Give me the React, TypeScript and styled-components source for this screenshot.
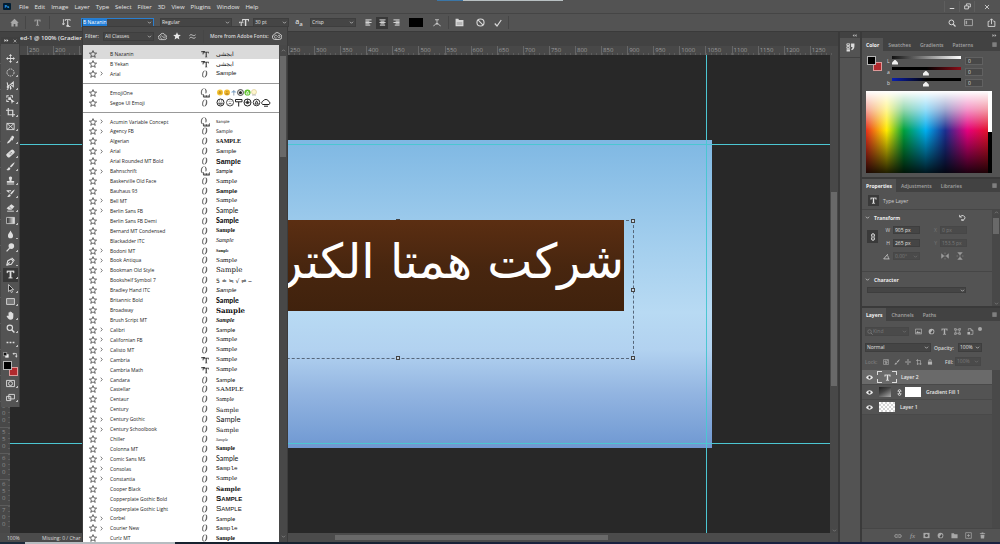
import React from "react";
import styled, { createGlobalStyle, css } from "styled-components";

const Global = createGlobalStyle`
  * { box-sizing: border-box; }
  html, body, #root { height: 100%; }
  body {
    margin: 0;
    background: #535353;
    color: #dcdcdc;
    font: 5px/8px "Open Sans", "Noto Sans", sans-serif;
    overflow: hidden;
  }
  button, input, select { font: inherit; color: inherit; margin: 0; padding: 0; border: 0; background: none; border-radius: 0; outline: 0; }
  svg { display: block; flex: none; }
`;

/* ---------- icons ---------- */

const S = { fill: "none", stroke: "currentColor", strokeWidth: 1.6 } as const;

const icons: Record<string, React.ReactNode> = {
  home: <path d="M8 1.5 0.5 8.5h2V15h4v-4.500h3V15h4V8.500h2z" fill="#a8a8a8" />,
  type: <path d="M1.500 1.500h13v4h-1.300c-.3-1.800-.9-2.400-2.700-2.400H9.300v9.400c0 .9.4 1.100 2.100 1.200v.9H4.600v-.9c1.700-.1 2.100-.3 2.100-1.200V3.100H5.500c-1.800 0-2.400.6-2.700 2.400H1.500z" fill="currentColor" stroke="currentColor" strokeWidth=".5" />,
  orient: <><path d="M5 2h10v3.500h-1c-.2-1.300-.6-1.800-2-1.800h-.9v8.500c0 .6.3.8 1.400.9v.9H7.800v-.9c1.100-.1 1.400-.3 1.400-.9V3.700h-1c-1.300 0-1.800.4-2 1.800H5z" fill="currentColor" /><path d="M2.500 2v10M.5 9.500l2 3 2-3M8 15.200h7" {...S} /></>,
  size: <path d="M5 1.500h11v4h-1.100c-.3-1.600-.8-2.200-2.300-2.200h-.9v9.100c0 .8.3 1 1.600 1.100v1H7.800v-1c1.300-.1 1.600-.3 1.600-1.100V3.300h-.9C7 3.300 6.400 3.900 6.100 5.500H5zM0 6h7v2.500h-.8C6 7.600 5.700 7.300 4.900 7.300h-.5v5.300c0 .5.2.7.9.8v.8H1.800v-.8c.7-.1.900-.3.900-.8V7.300h-.5C1.300 7.300 1 7.600.8 8.500H0z" fill="currentColor" />,
  chevDown: <path d="m3 5.500 5 5 5-5" {...S} strokeWidth={2} />,
  chevUp: <path d="m3 10.500 5-5 5 5" {...S} strokeWidth={2} />,
  chevRight: <path d="m5.500 2 5 6-5 6" {...S} strokeWidth={1.800} />,
  alignL: <path d="M1 2h14M1 5h9M1 8h14M1 11h9M1 14h11" {...S} strokeWidth={2.200} />,
  alignC: <path d="M1 2h14M3.500 5h9M1 8h14M3.500 11h9M2 14h12" {...S} strokeWidth={2.200} />,
  alignR: <path d="M1 2h14M6 5h9M1 8h14M6 11h9M4 14h11" {...S} strokeWidth={2.200} />,
  warp: <path d="M4 1.500h8M8 1.500v8M5.500 9h5M1 14.500c2-4 5-4.500 7-4 2-.5 5 0 7 4" {...S} strokeWidth={1.600} />,
  folder: <><path d="M1 1.500h5l1 2h8v11H1z" fill="currentColor" /><path d="M3 7h10v5.500H3z" fill="#b5b5b5" /></>,
  cancel: <><circle cx="8" cy="8" r="6.300" {...S} strokeWidth={2} /><path d="m3.500 3.500 9 9" {...S} strokeWidth={2} /></>,
  check: <path d="m1.500 9 4.500 5L14.500 2" {...S} strokeWidth={2.400} />,
  search: <><circle cx="6.800" cy="6.800" r="4.800" {...S} strokeWidth={2} /><path d="m10.500 10.500 4.500 4.500" {...S} strokeWidth={2.600} /></>,
  workspace: <g color="#a8a8a8"><path d="M1 2.500h14v11H1z" {...S} /><path d="M3 5h2.500v6H3z" fill="currentColor" /></g>,
  share: <path d="M4.500 6H2v9h12V6h-2.500M8 11V1.500M5 4.500l3-3 3 3" {...S} />,
  min: <path d="M2 12h12" {...S} strokeWidth={2.600} />,
  restore: <path d="M5.500 6V2h9v7H10M1.500 6.500h8.500v7H1.500z" {...S} strokeWidth={2} />,
  close: <path d="m2.500 2.500 11 11M13.500 2.500l-11 11" {...S} strokeWidth={2.200} />,
  collapse: <path d="M7.500 3v10L2 8zM14.500 3v10L9 8z" fill="currentColor" />,
  expand: <path d="M1.500 3v10L7 8zM8.500 3v10L14 8z" fill="currentColor" />,
  menu: <path d="M1 3h14M1 6.500h14M1 10h14M1 13.500h14" {...S} strokeWidth={1.600} />,
  star: <path d="m8 1.200 2 4.800 5.200.3-4 3.400 1.300 5L8 11.900l-4.500 2.800 1.300-5-4-3.400L6 6z" {...S} strokeWidth={1.300} />,
  starFill: <path d="m8 .5 2.200 5 5.500.5-4.200 3.600 1.300 5.400L8 12.100 3.200 15l1.300-5.400L.3 6l5.500-.5z" fill="#e8e8e8" />,
  cloud: <><path d="M4.500 13.500a4 4 0 0 1-.8-7.900A4.800 4.800 0 0 1 12.500 5.200a4.200 4.200 0 0 1-1 8.300z" {...S} strokeWidth={1.500} /><path d="M7.500 11a2.300 2.300 0 1 1-.5-4c1 .5 2.500 3.500 4 3.500a1.800 1.800 0 1 0-1.300-3" {...S} strokeWidth={1.200} /></>,
  approx: <path d="M1 6c2.500-3 4.500-2.500 7-1s4.500 1.500 7-1M1 12c2.500-3 4.500-2.500 7-1s4.500 1.500 7-1" {...S} strokeWidth={2} />,
  opentype: <path d="M7 1.500C3.500 3 2 12 5.200 14.500 1.800 14 2.500 3 7 1.500zM9.500 1.500c3.800.8 3 11.500-2 13 3-2.500 4.500-10.500 2-13z" fill="#333" stroke="#444" strokeWidth=".9" />,
  variable: <><path d="M5.500 1C2.500 2 1.200 9 4 11 .8 10.500 1.500 2 5.500 1zM7.500 1c3 .8 2.800 5 1.800 7.500.6-2.500.4-6-1.800-7.500z" fill="#333" stroke="#444" strokeWidth=".8" /><path d="M5.500 10v4.500h10V10M8 11.500v3M10.500 11.500v3M13 11.500v3" {...S} strokeWidth={1.200} /></>,
  truetype: <path d="M5 3.500h10.500V7h-1c-.2-1.500-.7-2-2-2h-1v8c0 .6.300.8 1.300.9v.8H8v-.8c1-.1 1.300-.3 1.300-.9V5h-1c-1.300 0-1.800.5-2 2H5zM.5 2h7.300v1.300H4.700V9H3.300V3.300H1.200V5H.5z" fill="#333" />,
  move: <path d="M8 0 5.300 3.500h2v3.800h-3.800v-2L0 8l3.500 2.700v-2h3.800v3.800h-2L8 16l2.700-3.500h-2V8.700h3.800v2L16 8l-3.500-2.700v2H8.700V3.500h2z" fill="currentColor" />,
  ellipse: <circle cx="8" cy="8" r="6.300" {...S} strokeDasharray="2.800 1.400" />,
  lasso: <path d="M2 2.500 3.500 9 7 7l6-5v8l-4-3M3.500 9c-2 1-1.500 3.500.5 3s1.500-2.500-.5-3M4 12c0 2-1 3-2.500 3M8 9v5l2-2" {...S} strokeWidth={1.800} />,
  objsel: <><path d="M1.500 5V1.500H5M8 1.500h3.500V5M1.500 8v3.500H5" {...S} strokeWidth={1.800} /><path d="M4 4h5v5H4zM8 6l7.500 6-3.500.4L10.500 16z" fill="currentColor" /></>,
  crop: <path d="M4 0v12h12M0 4h12v12" {...S} strokeWidth={2} />,
  frame: <path d="M1.500 2.500h13v11h-13zM1.500 2.500l13 11M14.500 2.500l-13 11" {...S} />,
  dropper: <path d="M10 1.800c1.800-2 5.600 1.200 4 3.700l-2 2 .8 1-1.500 1.400-1-.8-5 5-3.600 1.200L3 11.800l5-5-.9-1L8.600 4.300l.6.500z" fill="currentColor" />,
  heal: <><rect x="0" y="4" width="16" height="8" rx="3" transform="rotate(-42 8 8)" fill="currentColor" /><path d="m5.500 8 2.500 2.500M7 6.500 9.700 9M8.500 5 11 7.500" stroke="#535353" strokeWidth="1" /></>,
  brush: <path d="M15.500.5c-3 1-6.500 4.500-8.500 7.700l1.800 1.700C11.500 7.500 14.500 4 15.500.5zM5.800 9.200c-2.500 0-2 3.300-5 4.500 2.500 2 7 1.200 6.900-2.700z" fill="currentColor" />,
  stamp: <path d="M8 .8c2.500 0 3.600 2 2.600 4L9.800 7v1.700h4.700v3.500h-13V8.700h4.700V7l-.8-2.200c-1-2 .1-4 2.600-4zM1.500 13.500h13V15h-13z" fill="currentColor" />,
  history: <path d="M15.500 1C12.500 2 9 5.500 7.500 8.300l1.700 1.500C12 7.500 14.500 4.500 15.500 1zM6.500 9.300c-2.300.3-1.800 3-4.500 4 2.500 1.800 6.500 1 6.400-2.500zM1 2h8v2H5l1.500 2-1.300.8L1 3.600z" fill="currentColor" />,
  eraser: <><path d="M9.500 2 15 6l-5 6H4.500L1 9.500z" fill="currentColor" /><path d="M5.500 6.500 10 10.500" stroke="#535353" /><path d="M2 14.500h12" {...S} /></>,
  gradient: <><defs><linearGradient id="toolGrad"><stop offset="0" stopColor="#222" /><stop offset="1" stopColor="#eee" /></linearGradient></defs><path d="M1 2.500h14v11H1z" fill="url(#toolGrad)" stroke="#ddd" strokeWidth="1.300" /></>,
  drop: <path d="M8 .8c1.500 4 4.500 5.700 4.500 9.200a4.500 4.700 0 0 1-9 0C3.500 6.500 6.500 4.800 8 .8z" fill="currentColor" />,
  dodge: <><circle cx="9.500" cy="5.500" r="5" fill="currentColor" /><path d="m6.500 9-5.500 6" {...S} strokeWidth={2.200} /></>,
  pen: <><path d="M1.500 14.500 3 7l6-3.500L13 7.500 9.500 13z" {...S} strokeWidth={1.900} /><path d="m10 1.500 5 5M1.500 14.500l5-5" {...S} strokeWidth={2} /></>,
  arrow: <path d="M4.500 1v12.500l3-2.800 2 4.500 2-.9-2-4.300h4z" fill="#222" stroke="#ddd" strokeWidth="1.400" />,
  rect: <path d="M1 2.800h14v10.400H1z" fill="#777" stroke="currentColor" strokeWidth="1.500" />,
  hand: <path d="M4.500 9V3.200a1 1 0 0 1 2 0V1.800a1.100 1.100 0 0 1 2.200 0v1a1.100 1.100 0 0 1 2.200 0v1.700a1 1 0 0 1 2.100 0V10c0 3-1.500 5.500-5 5.500-3.200 0-4.500-2-7-6 .8-1.300 2.300-.8 3.500-.5z" fill="currentColor" />,
  dots: <path d="M1 6.500h3.200v3H1zM6.400 6.500h3.200v3H6.400zM11.800 6.500H15v3h-3.200z" fill="currentColor" />,
  mini: <><path d="M6 6h9v9H6z" fill="#eee" /><path d="M1 1h9v9H1z" fill="#111" stroke="#ddd" strokeWidth="1.500" /></>,
  swap: <path d="M6 1 1 4.500 6 8V5.500h4.500V10H8l3.500 5 3.500-5h-2.500V3.500H6z" fill="currentColor" />,
  mask: <><path d="M1 2.500h14v11H1z" {...S} /><circle cx="8" cy="8" r="3.500" {...S} /></>,
  screen: <path d="M5 2.500h10v8H5zM1 6h7.500v7.500H1z" fill="#535353" stroke="currentColor" strokeWidth="1.600" />,
  histPanel: <><path d="M1.500 1.500h5v3h-5zM1.500 6.500h5v3h-5z" {...S} /><path d="M1 11h6v4H1zM9 1h6v4c0 4-1 6-4.500 8L9 11c2-1.500 2.500-2.500 2.500-4H9z" fill="currentColor" /></>,
  link: <path d="M5 7V4.500a3 3 0 0 1 6 0V7M5 9v2.500a3 3 0 0 0 6 0V9M8 5v6" {...S} strokeWidth={2} />,
  reset: <path d="M3 6.500A5.500 5.500 0 1 1 5 13.500H11M1.500 2v5h5" {...S} strokeWidth={1.800} />,
  angle: <path d="M15 13.500H1.500L11 2.500M9 5c2 1.500 3.500 4.500 3.500 8" {...S} strokeWidth={1.800} />,
  flipH: <path d="M1 3.500v9L6 8zM15 3.500v9L10 8zM8 1v3M8 6v4M8 12v3" fill="currentColor" stroke="currentColor" />,
  flipV: <path d="M3.500 1h9L8 6zM3.500 15h9L8 10zM1 8h3M6 8h4M12 8h3" fill="currentColor" stroke="currentColor" />,
  image: <><path d="M1 2.500h14v11H1z" {...S} /><path d="m2 12 4-5 3 3 2-1.500 3 3.500z" fill="currentColor" /></>,
  adjust: <><circle cx="8" cy="8" r="6.500" fill="currentColor" /><path d="M8 3.500A4.500 4.500 0 0 1 8 12.500z" fill="#484848" transform="rotate(35 8 8)" /></>,
  shape: <path d="M4 4h8v8H4zM1 1h4v4H1zM11 1h4v4h-4zM1 11h4v4H1zM11 11h4v4h-4z" {...S} strokeWidth={1.400} />,
  smart: <><path d="M3 6V1.500h6L13.500 6v8.500H8M9 1.500V6h4.500" {...S} /><path d="M1 9h6v6H1z" fill="currentColor" /></>,
  checker: <path d="M1.500 1.500h13v13h-13zM5 5h3v3H5zM8 8h3v3H8zM5 11h3v3M11 2v3h3" {...S} />,
  artboard: <path d="M4 0v16M12 4v12M0 4h12M2 13h13" {...S} />,
  lock: <><path d="M2.500 7h11v8h-11z" fill="currentColor" /><path d="M5 7V4.500a3 3 0 0 1 6 0V7" {...S} strokeWidth={2} /></>,
  eye: <><path d="M0 8c4-6.500 12-6.500 16 0-4 6.500-12 6.500-16 0z" fill="currentColor" /><circle cx="8" cy="8" r="2.600" fill="#333" /></>,
  chain: <path d="M7 5H4.500a3 3 0 0 0 0 6H7M9 5h2.500a3 3 0 0 1 0 6H9M5 8h6" {...S} />,
  maskBtn: <><path d="M1 2h14v12H1z" fill="currentColor" /><circle cx="8" cy="8" r="3.500" fill="#505050" /></>,
  group: <path d="M1 3h5.500l1.500 2h7v9H1z" fill="currentColor" />,
  plus: <path d="M1.500 1.500h13v13h-13zM8 4.500v7M4.500 8h7" {...S} />,
  trash: <path d="M2 3h12v1.800H2zM6 1h4v2H6zM3.500 6h9l-.8 9H4.300z" fill="currentColor" />,
};

const Icon = ({ name, size = 8 }: { name: string; size?: number }) => (
  <svg width={size} height={size} viewBox="0 0 16 16" aria-hidden="true">{icons[name]}</svg>
);

/* ---------- shell ---------- */

const Shell = styled.div`
  height: 100%;
  display: flex;
  flex-direction: column;
  position: relative;
`;
const TopStrip = styled.div`
  position: absolute; top: 0; left: 437px; width: 126px; height: 1px;
  background: linear-gradient(90deg, #3b76a6 0 26px, #b8c0c2 26px);
`;
const MenuBar = styled.nav`
  height: 13px; flex: none;
  display: flex; align-items: center; gap: 6px;
  padding: 0 2px 0 3px;
  background: #535353;
  font-size: 6px;
`;
const Logo = styled.span`
  width: 8px; height: 7px; margin-right: 2px;
  background: #001d33; color: #31a8ff; border-radius: 1px;
  font-size: 4px; line-height: 7px; font-weight: 700; text-align: center;
`;
const MenuButton = styled.button`color: #e6e6e6; line-height: 10px;`;
const WindowButtons = styled.div`
  margin-left: auto; display: flex; height: 11px;
  button { width: 15px; display: grid; place-items: center; border-left: 1px solid #5e5e5e; }
  button:last-child { width: 24px; }
`;
const OptionsBar = styled.div`
  height: 19px; flex: none;
  display: flex; align-items: center;
  border-top: 1px solid #454545;
  border-bottom: 1px solid #3a3a3a;
  padding: 0 3px 0 9px;
  color: #d8d8d8;
`;
const Tool = styled.button<{ $on?: boolean; $w?: number; $ml?: number; $dim?: boolean }>`
  flex: none;
  width: ${p => p.$w ?? 12}px; height: 12px;
  margin-left: ${p => p.$ml ?? 0}px;
  display: grid; place-items: center;
  ${p => p.$dim && css`color: #a8a8a8;`}
  ${p => p.$on && css`background: #383838;`}
`;
const Divider = styled.span<{ $ml?: number }>`
  width: 1px; height: 13px; background: #464646; flex: none;
  margin-left: ${p => p.$ml ?? 6}px;
`;
const Spacer = styled.span`flex: 1;`;

const Field = styled.label<{ $w: number; $ml?: number; $focus?: boolean; $dim?: boolean; $h?: number }>`
  flex: none;
  width: ${p => p.$w}px; height: ${p => p.$h ?? 9}px;
  margin-left: ${p => p.$ml ?? 0}px;
  display: flex; align-items: center; justify-content: space-between;
  background: ${p => (p.$dim ? "#4a4a4a" : "#454545")};
  border: 1px solid ${p => (p.$focus ? "#2a7fd0" : p.$dim ? "#474747" : "#3e3e3e")};
  color: ${p => (p.$dim ? "#7a7a7a" : "#e2e2e2")};
  padding: 0 1px;
  select, input { flex: 1; min-width: 0; height: 7px; line-height: 7px; appearance: none; }
`;
const FontName = styled.input`
  && { flex: none; width: 24px; background: #1f7cd6; color: #fff; }
`;
const Swatch = styled.button<{ $c: string }>`background: ${p => p.$c};`;
const InkSwatch = styled(Swatch)`width: 14px; height: 9px; margin-left: 7px; flex: none;`;
const SmoothMark = styled.span`font: 600 7px/8px "Open Sans", sans-serif; small { font-size: 6px; vertical-align: -2px; }`;

const Dropdown = ({ label, value, w, ml, dim, h }: { label: string; value: string; w: number; ml?: number; dim?: boolean; h?: number }) => (
  <Field $w={w} $ml={ml} $dim={dim} $h={h}>
    <select aria-label={label} defaultValue={value}><option>{value}</option></select>
    <Icon name="chevDown" size={5} />
  </Field>
);

const Workspace = styled.div`flex: 1; min-height: 0; display: flex; background: #3a3a3a;`;
const Taskbar = styled.div`
  height: 2px; flex: none;
  background: linear-gradient(90deg, #1c2c3c 0 25px, #b5bcc0 25px 175px, #17222f 175px 300px, #1a2140 600px);
`;

/* ---------- document window ---------- */

const Doc = styled.main`flex: 1; min-width: 0; display: flex; flex-direction: column; background: #424242;`;
const DocTab = styled.div`
  height: 14px; flex: none; padding: 2px 0 0 20px;
  font-size: 6px; font-weight: 600; color: #e6e6e6; line-height: 9px;
  overflow: hidden; white-space: nowrap;
`;
const HRuler = styled.div`
  height: 9px; flex: none; display: flex;
  padding: 0 2px 0 27px;
  background: #484848; color: #9b9b9b;
  font-size: 6px; line-height: 9px;
`;
const HTick = styled.span`
  flex: 1 1 0; min-width: 0; padding-left: 1px;
  border-left: 1px solid #666;
  background: repeating-linear-gradient(90deg, #5c5c5c 0 1px, transparent 1px 5px) 0 100% / 100% 2px no-repeat;
`;
const DocBody = styled.div`flex: 1; min-height: 0; display: flex;`;
const VRuler = styled.div`
  width: 10px; flex: none; padding-top: 8px; overflow: hidden;
  background: #484848; color: #8e8e8e; font-size: 6px;
`;
const VTick = styled.div`
  height: 26px; padding: 1px 0 0 2px;
  display: flex; flex-direction: column;
  border-top: 1px solid #5c5c5c;
  background: repeating-linear-gradient(180deg, #5c5c5c 0 1px, transparent 1px 5px) 100% 0 / 2px 100% no-repeat;
  line-height: 7px;
`;
const Canvas = styled.div`flex: 1; position: relative; overflow: hidden; background: #282828;`;
const Artwork = styled.div`
  position: absolute; left: 73px; top: 85px; width: 629px; height: 308px;
  background: linear-gradient(#7fb8e3, #a4cfee 35%, #b8daf3 56%, #b2d2f0 68%, #93b5e1 82%, #6f98d2);
`;
const TextBand = styled.div`
  position: absolute; right: 88px; top: 80px; left: 0; height: 91px;
  background: linear-gradient(#5b2e12, #48260f 50%, #40220d);
  color: #fff; direction: rtl; white-space: nowrap;
  font: 48px/82px "DejaVu Sans", sans-serif;
`;
const TextBox = styled.div`
  position: absolute; right: 78px; top: 80px; width: 472px; height: 139px;
  border: 1px dashed #57677a;
`;
const Handle = styled.i<{ $x: string; $y: string }>`
  position: absolute; left: ${p => p.$x}; top: ${p => p.$y};
  width: 4px; height: 4px; margin: -2px;
  border: 1px solid #444; background: #c4d4e4;
`;
const Guide = styled.i<{ $v?: boolean; $at: number }>`
  position: absolute; background: #4cc6d2;
  ${p => p.$v
    ? css`left: ${p.$at}px; top: 0; bottom: 0; width: 1px;`
    : css`top: ${p.$at}px; left: 0; right: 0; height: 1px;`}
`;
const VScroll = styled.div`
  width: 8px; flex: none; background: #484848; color: #8a8a8a;
  display: flex; flex-direction: column; align-items: center;
`;
const Thumb = styled.i<{ $h: number; $mt: number }>`
  width: 6px; height: ${p => p.$h}px; margin-top: ${p => p.$mt}px; background: #696969; flex: none;
`;
const StatusBar = styled.footer`
  height: 9px; flex: none; display: flex; align-items: center;
  background: #4b4b4b; padding-left: 7px; color: #dcdcdc;
  output { width: 35px; }
`;
const HThumb = styled.i`width: 273px; height: 5px; margin-left: 254px; background: #696969;`;

/* the font menu covers the ruler between its 2nd and 11th marks */
const hLabels = Array.from({ length: 31 }, (_, i) => (i > 1 && i < 10 ? "" : Math.abs(-250 + i * 50)));
/* the tools palette covers the upper part of the vertical ruler */
const vLabels = Array.from({ length: 18 }, (_, i) => (i < 13 ? "" : String(-150 + i * 50)));

/* ---------- tools palette ---------- */

const Palette = styled.aside`
  position: absolute; left: 1px; top: 37px; width: 19px; height: 370px;
  background: #535353; border-right: 1px solid #3d3d3d; color: #dedede;
  display: flex; flex-direction: column; align-items: center;
`;
const PaletteHead = styled.div`
  align-self: stretch; height: 7px; background: #3f3f3f; margin-bottom: 8px;
  display: flex; justify-content: space-between; align-items: center; padding: 0 2px 0 3px; flex: none;
`;
const PaletteTools = styled.div<{ $h: number }>`
  flex: 0 0 ${p => p.$h}px; display: flex; flex-direction: column;
`;
const PaletteTool = styled.button<{ $on?: boolean }>`
  width: 15px; flex: 1 1 0; min-height: 0;
  display: grid; place-items: center;
  background:
    linear-gradient(135deg, transparent 50%, #bbb 50%) 100% 80% / 2px 2px no-repeat
    ${p => (p.$on ? "#383838" : "transparent")};
`;
const Pair = styled.div`
  display: flex; gap: 3px; padding: 3px 0 3px; flex: none;
`;
const Chips = styled.div<{ $s: number }>`
  display: grid; width: ${p => p.$s + 6}px; height: ${p => p.$s + 6}px; flex: none;
  button { grid-area: 1 / 1; width: ${p => p.$s}px; height: ${p => p.$s}px; border: 1px solid #b5b5b5; }
  button:first-child { place-self: end; border-color: #d99; }
`;
const ColorChips = ({ s }: { s: number }) => (
  <Chips $s={s}>
    <Swatch $c="#b02a2e" aria-label="Background colour" />
    <Swatch $c="#000" aria-label="Foreground colour" />
  </Chips>
);

const tools = ["move", "ellipse", "lasso", "objsel", "crop", "frame", "dropper", "heal", "brush", "stamp", "history", "eraser", "gradient", "drop", "dodge", "pen", "type", "arrow", "rect", "hand", "search", "dots"];

/* ---------- font menu ---------- */

const FontMenu = styled.section`
  position: absolute; left: 82px; top: 26px; bottom: 2px; width: 206px;
  display: flex; flex-direction: column; background: #4a4a4a;
  border: solid #3c3c3c; border-width: 1px 1px 0;
`;
const FilterBar = styled.div`
  height: 18px; flex: none; display: flex; align-items: center;
  padding: 0 2px; color: #d2d2d2; white-space: nowrap;
`;
const ListArea = styled.div`flex: 1; min-height: 0; display: flex; overflow: hidden;`;
const List = styled.div`
  flex: 1; display: flex; flex-direction: column;
  padding-top: 4px; margin-bottom: -1px;
  background: #fff; color: #222;
`;
const Rule = styled.hr`flex: none; margin: 4px 0; border: 0; height: 1px; width: 100%; background: #999;`;
const FontRow = styled.button<{ $on?: boolean }>`
  flex: 1 1 0; min-height: 0;
  display: grid; grid-template-columns: 10px 11px 90px 16px 1fr; align-items: center;
  padding-left: 6px; text-align: left; white-space: nowrap; color: #1c1c1c;
  ${p => p.$on && css`background: #dadada; box-shadow: 0 -4px #dadada;`}
`;
const Kind = styled.span`width: 10px; display: grid; place-items: center;`;
const Sample = styled.span<{ $f: string; $k?: boolean; $b?: boolean; $i?: boolean; $s?: number; $c?: boolean }>`
  font-family: ${p => p.$f}; font-size: ${p => p.$s ?? 7}px; line-height: 9px;
  ${p => p.$b && "font-weight: 900;"} ${p => p.$i && "font-style: italic;"}
  ${p => p.$c && "font-variant: small-caps;"}
  color: #111;
`;
const MenuScroll = styled.div`
  width: 8px; flex: none; background: #484848; color: #999;
  display: flex; flex-direction: column; align-items: center; justify-content: space-between; padding: 3px 0;
`;

type F = { n: string; x?: boolean; t?: string; s?: string; f?: string; b?: boolean; i?: boolean; z?: number; c?: boolean };
const sans = '"Liberation Sans", sans-serif';
const serif = '"Liberation Serif", serif';
const dserif = '"DejaVu Serif", serif';
const cond = '"DejaVu Sans Condensed", sans-serif';
const arabic = '"DejaVu Sans", sans-serif';

const g1: F[] = [
  { n: "B Nazanin", t: "truetype", s: "ابجشی", f: arabic, z: 6 },
  { n: "B Yekan", t: "truetype", s: "ابجشی", f: arabic, z: 6 },
  { n: "Arial", x: true, f: sans, z: 6 },
];
const g2: F[] = [
  { n: "EmojiOne", t: "variable" },
  { n: "Segoe UI Emoji" },
];
const g3: F[] = [
  { n: "Acumin Variable Concept", x: true, t: "variable", f: cond, z: 4 },
  { n: "Agency FB", x: true, f: cond, z: 5 },
  { n: "Algerian", s: "SAMPLE", f: serif, b: true, z: 6 },
  { n: "Arial", x: true, f: sans, z: 6 },
  { n: "Arial Rounded MT Bold", f: sans, b: true, z: 7 },
  { n: "Bahnschrift", x: true, t: "variable", f: '"Roboto"', z: 5 },
  { n: "Baskerville Old Face", f: serif },
  { n: "Bauhaus 93", f: sans, b: true, z: 6 },
  { n: "Bell MT", x: true, f: serif },
  { n: "Berlin Sans FB", x: true, f: "Lato", z: 7 },
  { n: "Berlin Sans FB Demi", f: "Lato", b: true, z: 7 },
  { n: "Bernard MT Condensed", f: serif, b: true, z: 6 },
  { n: "Blackadder ITC", f: serif, i: true, z: 6 },
  { n: "Bodoni MT", x: true, f: serif, b: true, z: 4 },
  { n: "Book Antiqua", x: true, f: serif },
  { n: "Bookman Old Style", x: true, f: dserif, z: 7 },
  { n: "Bookshelf Symbol 7", s: "5 ≐ ≒ √ ⇌ ⌣", f: '"DejaVu Sans"', z: 6 },
  { n: "Bradley Hand ITC", f: sans, i: true, z: 6 },
  { n: "Britannic Bold", f: "Lato", b: true, z: 7 },
  { n: "Broadway", f: dserif, b: true, z: 7 },
  { n: "Brush Script MT", f: serif, b: true, i: true, z: 6 },
  { n: "Calibri", x: true, f: "Lato", z: 6 },
  { n: "Californian FB", x: true, f: serif },
  { n: "Calisto MT", x: true, f: serif },
  { n: "Cambria", x: true, t: "truetype", f: serif },
  { n: "Cambria Math", t: "truetype", f: serif },
  { n: "Candara", x: true, f: "Lato", z: 6 },
  { n: "Castellar", s: "SAMPLE", f: serif, z: 7 },
  { n: "Centaur", f: serif, z: 6 },
  { n: "Century", f: dserif, z: 6 },
  { n: "Century Gothic", x: true, f: "Inter", z: 7 },
  { n: "Century Schoolbook", x: true, f: dserif, z: 6 },
  { n: "Chiller", f: serif, i: true, z: 4 },
  { n: "Colonna MT", f: serif, b: true, z: 6 },
  { n: "Comic Sans MS", x: true, f: "Lato", z: 7 },
  { n: "Consolas", x: true, f: '"Liberation Mono"', z: 6 },
  { n: "Constantia", x: true, f: serif },
  { n: "Cooper Black", f: dserif, b: true, z: 6 },
  { n: "Copperplate Gothic Bold", f: sans, b: true, c: true, z: 8 },
  { n: "Copperplate Gothic Light", f: sans, c: true, z: 8 },
  { n: "Corbel", x: true, f: "Lato", z: 6 },
  { n: "Courier New", x: true, f: '"Liberation Mono"', z: 6 },
  { n: "Curlz MT", f: serif, b: true, z: 6 },
];

const ColorEmoji = () => (
  <svg width="44" height="9" viewBox="0 0 44 9" aria-hidden="true">
    <circle cx="4" cy="4.500" r="3" fill="#f5c431" /><path d="M2.500 5h3M3 3.500h.6M4.600 3.500h.6" stroke="#8a5a10" strokeWidth=".8" />
    <circle cx="11" cy="4.500" r="3" fill="#f3bb30" /><path d="M9.500 6h3M10 3.800h.6M11.600 3.800h.6" stroke="#8a5a10" strokeWidth=".8" />
    <path d="M15 4.500a3 3 0 0 1 5.500 0z" fill="#8fb6da" /><path d="M17.800 2v5.500" stroke="#7a8ba0" strokeWidth=".8" />
    <circle cx="24.500" cy="4.500" r="3" fill="#ddd" stroke="#333" strokeWidth=".8" /><path d="m24.500 3 1.600 1.200-.6 1.800h-2l-.6-1.800z" fill="#222" />
    <circle cx="31.500" cy="4.500" r="3.100" fill="#5cbf2a" /><path d="m30 6 1.500-3 1.500 3z" fill="none" stroke="#fff" strokeWidth=".8" />
    <circle cx="38" cy="4" r="2.500" fill="#fff6cf" stroke="#ddcf98" strokeWidth=".7" /><path d="M36 7h4" stroke="#bbb" />
  </svg>
);
const LineEmoji = () => (
  <svg width="56" height="9" viewBox="0 0 56 9" fill="none" stroke="#222" aria-hidden="true">
    <circle cx="4.500" cy="4.500" r="3.500" /><path d="M2.500 5.200c1 1.500 3 1.500 4 0zM3.200 3h.8M5.200 3H6" strokeWidth=".8" />
    <circle cx="14" cy="4.500" r="3.500" strokeWidth=".8" /><path d="M12.500 6.200c1-1 2-1 3 0M12.800 3.300h.7M14.700 3.300h.7" strokeWidth=".7" />
    <path d="M19.500 1.500h6.500v2.300h-6.500zM22.700 4v4.500" />
    <circle cx="31.500" cy="4.500" r="3.500" /><path d="m31.500 3.100 1.300 1-.5 1.500h-1.600l-.5-1.500z" fill="#222" strokeWidth=".7" /><path d="m31.500 1v2M28.300 4.500l2-.4M34.700 4.500l-2-.4" strokeWidth=".6" />
    <circle cx="40.500" cy="4.500" r="3.300" strokeWidth=".9" /><path d="M39 6 40.500 2.800 42.200 6z" strokeWidth=".9" />
    <path d="M46.500 6.500a2 2 0 0 1 .7-3.500 3 3 0 0 1 5.500.5 1.600 1.600 0 0 1 .3 3zM48 8.200h4" />
  </svg>
);

const renderFont = (f: F, i: number) => (
  <FontRow key={f.n + i} $on={f.n === "B Nazanin"}>
    <Icon name="star" size={8} />
    <span>{f.x && <Icon name="chevRight" size={5} />}</span>
    <span>{f.n}</span>
    <Kind><Icon name={f.t ?? "opentype"} size={f.t === "variable" ? 10 : 8} /></Kind>
    {f.n === "EmojiOne" ? <ColorEmoji /> : f.n === "Segoe UI Emoji" ? <LineEmoji /> : (
      <Sample $f={f.f ?? sans} $b={f.b} $i={f.i} $s={f.z} $c={f.c}>{f.s ?? "Sample"}</Sample>
    )}
  </FontRow>
);

/* ---------- right dock ---------- */

const IconDock = styled.aside`
  width: 20px; flex: none; margin-left: 2px; background: #535353;
  display: flex; flex-direction: column;
`;
const DockHead = styled.div`
  height: 6px; flex: none; background: #424242; color: #b5b5b5;
  display: flex; justify-content: flex-end; align-items: center; padding-right: 3px;
`;
const DockButton = styled.button`height: 20px; display: grid; place-items: center; color: #ddd; border-bottom: 1px solid #414141;`;
const Dock = styled.aside`width: 138px; flex: none; margin-left: 2px; display: flex; flex-direction: column;`;
const Panel = styled.section<{ $h?: number }>`
  ${p => (p.$h ? `height: ${p.$h}px; flex: none;` : "flex: 1; min-height: 0;")}
  margin-bottom: 2px; background: #535353;
  display: flex; flex-direction: column;
  &:last-child { margin-bottom: 0; }
`;
const Tabs = styled.div`
  height: 13px; flex: none; display: flex; background: #424242; padding-right: 3px; align-items: center;
`;
const Tab = styled.button<{ $on?: boolean }>`
  height: 13px; padding: 0 4px; margin-right: 1px; font-weight: ${p => (p.$on ? 700 : 600)};
  color: ${p => (p.$on ? "#f2f2f2" : "#a2a2a2")};
  background: ${p => (p.$on ? "#535353" : "none")};
`;
const PanelTabs = ({ names }: { names: string[] }) => (
  <Tabs role="tablist">
    {names.map((n, i) => <Tab key={n} role="tab" aria-selected={i === 0} $on={i === 0}>{n}</Tab>)}
    <Spacer />
    <Icon name="menu" size={5} />
  </Tabs>
);

const ColorBody = styled.div`flex: 1; display: flex; flex-direction: column; padding: 4px 8px 4px 4px;`;
const ColorTop = styled.div`display: flex; gap: 5px; padding: 1px 9px 0 1px;`;
const Sliders = styled.div`flex: 1; display: flex; flex-direction: column; gap: 2px;`;
const SliderRow = styled.label`
  height: 9px; display: grid; grid-template-columns: 5px 1fr 22px; align-items: center;
  input[type="text"] { height: 8px; margin-left: 4px; width: 18px; padding-left: 2px; background: #484848; border: 1px solid #616161; line-height: 6px; }
`;
const Range = styled.input<{ $g: string }>`
  appearance: none; width: 100%; min-width: 0; height: 9px;
  background: ${p => p.$g} 0 0 / 100% 3px no-repeat;
  &::-webkit-slider-thumb {
    appearance: none; width: 6px; height: 5px; margin-top: 3px;
    background: #f0f0f0; clip-path: polygon(50% 0, 100% 60%, 100% 100%, 0 100%, 0 60%);
  }
`;
const Spectrum = styled.div`
  flex: 1; margin-top: 4px; display: flex;
  &::before {
    content: ""; flex: 1;
    background:
      linear-gradient(#fff, #fff9 22%, transparent 48%, #0006 72%, #000d),
      linear-gradient(90deg, #e8301c, #ffec00 17%, #00a03c 31%, #00a5a0 41%, #00aeef 49%, #1c2f8f 65%, #e5007e 83%, #e3122a);
  }
  &::after { content: ""; width: 4px; background: linear-gradient(#fff 50%, #000 50%); }
`;

const TypeRow = styled.div`
  height: 18px; flex: none; display: flex; align-items: center; gap: 4px; padding-left: 6px;
  border-bottom: 1px solid #464646; color: #d0d0d0;
`;
const Badge = styled.span<{ $h: number }>`
  width: 11px; height: ${p => p.$h}px; display: grid; place-items: center; background: #3a3a3a; color: #e8e8e8; flex: none;
`;
const PropsBody = styled.div`flex: 1; display: flex; min-height: 0;`;
const PropsMain = styled.div`flex: 1; min-width: 0; display: flex; flex-direction: column;`;
const Heading = styled.h3`
  margin: 0; height: 15px; padding: 0 26px 0 3px; display: flex; align-items: center; gap: 4px; flex: none;
  font-size: 5px; font-weight: 700; color: #ececec;
`;
const TransformGrid = styled.div`
  display: grid; grid-template-columns: 13px 13px 27px 20px 27px; row-gap: 5px; padding-left: 5px;
  align-items: center; height: 47px; padding-top: 1px; align-content: start; border-bottom: 1px solid #464646;
  > b { grid-row: span 2; font-weight: 400; }
`;
const Key = styled.span<{ $dim?: boolean }>`
  text-align: right; padding-right: 3px; color: ${p => (p.$dim ? "#767676" : "#cfcfcf")};
  display: flex; justify-content: flex-end;
`;
const Flip = styled.div`display: flex; gap: 7px; color: #9b9b9b; grid-column: span 2; padding-left: 21px;`;
const CharField = styled.div`
  height: 6px; margin: 0 26px 0 5px; background: #454545; border: 1px solid #3e3e3e;
  display: flex; justify-content: flex-end;
`;

const LayerTools = styled.div<{ $h: number }>`
  height: ${p => p.$h}px; flex: none; display: flex; align-items: center; padding-left: 3px; color: #b4b4b4;
`;
const Dot = styled.i`width: 4px; height: 4px; border-radius: 50%; background: #a8a8a8; margin: 0 0 5px 2px;`;
const Label = styled.span<{ $ml?: number; $dim?: boolean; $w?: number }>`
  margin-left: ${p => p.$ml ?? 0}px; color: ${p => (p.$dim ? "#7a7a7a" : "#d8d8d8")}; font-weight: 600;
  ${p => p.$w && `width: ${p.$w}px; flex: none;`}
`;
const Layers = styled.div`flex: 1; background: #4d4d4d; border-right: 8px solid #494949; display: flex; flex-direction: column;`;
const Layer = styled.div<{ $on?: boolean }>`
  height: 15px; flex: none; display: flex; align-items: center; padding-left: 4px; gap: 5px;
  background: ${p => (p.$on ? "#6a6a6a" : "#535353")}; border-bottom: 1px solid #494949;
  color: #e8e8e8; font-weight: 600;
`;
const Thumbnail = styled.span<{ $k: "text" | "grad" | "mask" | "clear" }>`
  width: 16px; height: 10px; flex: none; display: grid; place-items: center; margin-left: 1px;
  ${p => p.$k === "grad" && css`width: 12px; background: linear-gradient(150deg, #222, #444 40%, #aaa);`}
  ${p => p.$k === "mask" && css`background: #fff; margin: 0 0 0 -3px;`}
  ${p => p.$k === "clear" && css`background: repeating-conic-gradient(#d5d5d5 0 25%, #fff 0 50%) 0 0 / 4px 4px;`}
  ${p => p.$k === "text" && css`
    width: 20px; height: 12px; margin-left: -1px; margin-right: -1px;
    background:
      linear-gradient(#ddd, #ddd) 0 0 / 5px 1px, linear-gradient(#ddd, #ddd) 100% 0 / 5px 1px,
      linear-gradient(#ddd, #ddd) 0 100% / 5px 1px, linear-gradient(#ddd, #ddd) 100% 100% / 5px 1px,
      linear-gradient(#ddd, #ddd) 0 0 / 1px 4px, linear-gradient(#ddd, #ddd) 100% 0 / 1px 4px,
      linear-gradient(#ddd, #ddd) 0 100% / 1px 4px, linear-gradient(#ddd, #ddd) 100% 100% / 1px 4px;
    background-repeat: no-repeat;
  `}
`;
const PanelFoot = styled.div`
  height: 14px; flex: none; display: flex; justify-content: flex-end; align-items: center;
  gap: 7px; padding-right: 14px; color: #a8a8a8; border-top: 1px solid #464646;
`;
const Fx = styled.button`font: italic 7px/8px "Liberation Serif", serif; width: 7px;`;

const slider = (name: string, g: string, v: number) => (
  <SliderRow key={name}>
    <span>{name}</span>
    <Range type="range" aria-label={name} defaultValue={v} $g={g} />
    <input type="text" aria-label={`${name} value`} defaultValue="0" />
  </SliderRow>
);

export default function App() {
  return (
    <Shell>
      <Global />
      <MenuBar>
        <Logo>Ps</Logo>
        {["File", "Edit", "Image", "Layer", "Type", "Select", "Filter", "3D", "View", "Plugins", "Window", "Help"].map(m => (
          <MenuButton key={m}>{m}</MenuButton>
        ))}
        <WindowButtons>
          <button aria-label="Minimize"><Icon name="min" size={6} /></button>
          <button aria-label="Restore"><Icon name="restore" size={7} /></button>
          <button aria-label="Close"><Icon name="close" size={6} /></button>
        </WindowButtons>
      </MenuBar>
      <TopStrip />

      <OptionsBar>
        <Tool $w={11} aria-label="Home"><Icon name="home" size={9} /></Tool>
        <Divider $ml={5} />
        <Tool $ml={5} $dim aria-label="Type tool"><Icon name="type" size={7} /></Tool>
        <Divider />
        <Tool $ml={10} aria-label="Text orientation"><Icon name="orient" size={9} /></Tool>
        <Field $w={73} $ml={9} $focus>
          <FontName aria-label="Font" defaultValue="B Nazanin" />
          <Icon name="chevDown" size={5} />
        </Field>
        <Dropdown label="Font style" value="Regular" w={72} ml={6} />
        <Tool $ml={6} aria-label="Font size"><Icon name="size" size={10} /></Tool>
        <Dropdown label="Size" value="30 pt" w={36} ml={3} />
        <Tool $ml={4} aria-label="Anti-aliasing"><SmoothMark>a<small>a</small></SmoothMark></Tool>
        <Dropdown label="Anti-alias" value="Crisp" w={46} ml={5} />
        <Tool $ml={6} aria-label="Align left"><Icon name="alignL" size={7} /></Tool>
        <Tool $ml={2} $on aria-label="Align centre"><Icon name="alignC" size={7} /></Tool>
        <Tool $ml={2} aria-label="Align right"><Icon name="alignR" size={7} /></Tool>
        <InkSwatch $c="#000" aria-label="Text colour" />
        <Tool $ml={8} aria-label="Warp text"><Icon name="warp" size={8} /></Tool>
        <Divider $ml={5} />
        <Tool $ml={4} aria-label="Panels"><Icon name="folder" size={9} /></Tool>
        <Tool $ml={9} aria-label="Cancel"><Icon name="cancel" size={9} /></Tool>
        <Tool $ml={6} aria-label="Commit"><Icon name="check" size={8} /></Tool>
        <Divider $ml={4} />
        <Spacer />
        <Tool aria-label="Search"><Icon name="search" size={8} /></Tool>
        <Tool $ml={4} aria-label="Workspace"><Icon name="workspace" size={9} /></Tool>
        <Tool $ml={11} aria-label="Share"><Icon name="share" size={9} /></Tool>
      </OptionsBar>

      <Workspace>
        <Doc>
          <DocTab>ed-1 @ 100% (Gradier</DocTab>
          <HRuler>{hLabels.map((n, i) => <HTick key={i}>{n}</HTick>)}</HRuler>
          <DocBody>
            <VRuler>{vLabels.map((n, i) => <VTick key={i}>{[...n].map((d, j) => <span key={j}>{d}</span>)}</VTick>)}</VRuler>
            <Canvas>
              <Artwork>
                <TextBox>
                  <Handle $x="50%" $y="0%" /><Handle $x="100%" $y="0%" />
                  <Handle $x="100%" $y="50%" /><Handle $x="100%" $y="100%" /><Handle $x="50%" $y="100%" />
                </TextBox>
                <TextBand>شرکت همتا الکتر</TextBand>
              </Artwork>
              <Guide $at={89} /><Guide $at={388} /><Guide $v $at={696} />
            </Canvas>
            <VScroll><Thumb $h={194} $mt={137} /><Spacer /><Icon name="chevDown" size={5} /></VScroll>
          </DocBody>
          <StatusBar>
            <output>100%</output><span>Missing: 0 / Char</span><HThumb />
          </StatusBar>
        </Doc>

        <IconDock>
          <DockHead><Icon name="collapse" size={5} /></DockHead>
          <DockButton aria-label="History"><Icon name="histPanel" size={9} /></DockButton>
        </IconDock>

        <Dock>
          <DockHead><Icon name="expand" size={5} /></DockHead>
          <Panel $h={139}>
            <PanelTabs names={["Color", "Swatches", "Gradients", "Patterns"]} />
            <ColorBody>
              <ColorTop>
                <ColorChips s={9} />
                <Sliders>
                  {slider("L", "linear-gradient(90deg, #111, #fff)", 0)}
                  {slider("a", "linear-gradient(90deg, #000 50%, #8c0d18)", 49)}
                  {slider("b", "linear-gradient(90deg, #0a1fb0, #000 50%)", 49)}
                </Sliders>
              </ColorTop>
              <Spectrum />
            </ColorBody>
          </Panel>

          <Panel $h={127}>
            <PanelTabs names={["Properties", "Adjustments", "Libraries"]} />
            <TypeRow><Badge $h={11}><Icon name="type" size={7} /></Badge>Type Layer</TypeRow>
            <PropsBody>
              <PropsMain>
                <Heading><Icon name="chevDown" size={5} />Transform<Spacer /><Icon name="reset" size={7} /></Heading>
                <TransformGrid>
                  <b><Badge $h={13}><Icon name="link" size={8} /></Badge></b>
                  <Key>W</Key><Field $w={27} $h={8}><input aria-label="Width" defaultValue="905 px" /></Field>
                  <Key $dim>X</Key><Field $w={27} $h={8} $dim><input aria-label="X" defaultValue="0 px" /></Field>
                  <Key>H</Key><Field $w={27} $h={8}><input aria-label="Height" defaultValue="265 px" /></Field>
                  <Key $dim>Y</Key><Field $w={27} $h={8} $dim><input aria-label="Y" defaultValue="153.5 px" /></Field>
                  <span /><Key><Icon name="angle" size={7} /></Key>
                  <Dropdown label="Angle" value="0.00°" w={27} h={8} dim />
                  <Flip><Icon name="flipH" size={8} /><Icon name="flipV" size={8} /></Flip>
                </TransformGrid>
                <Heading><Icon name="chevDown" size={5} />Character</Heading>
                <CharField><Icon name="chevDown" size={5} /></CharField>
              </PropsMain>
              <VScroll><Icon name="chevUp" size={5} /><Thumb $h={16} $mt={3} /><Spacer /><Icon name="chevDown" size={5} /></VScroll>
            </PropsBody>
          </Panel>

          <Panel>
            <PanelTabs names={["Layers", "Channels", "Paths"]} />
            <LayerTools $h={21}>
              <Field $w={44} $dim>
                <Icon name="search" size={6} />
                <select aria-label="Filter kind"><option>Kind</option></select>
                <Icon name="chevDown" size={5} />
              </Field>
              {["image", "adjust", "type", "shape", "smart"].map((n, i) => (
                <Tool key={n} $ml={i ? 1 : 3} aria-label={n}><Icon name={n} size={7} /></Tool>
              ))}
              <Dot />
            </LayerTools>
            <LayerTools $h={11}>
              <Dropdown label="Blend mode" value="Normal" w={66} />
              <Label $ml={3} $w={24}>Opacity:</Label>
              <Dropdown label="Opacity" value="100%" w={24} />
            </LayerTools>
            <LayerTools $h={17}>
              <Label $dim $w={15}>Lock:</Label>
              {["checker", "brush", "move", "artboard", "lock"].map((n, i) => (
                <Tool key={n} $w={11} aria-label={n}><Icon name={n} size={6} /></Tool>
              ))}
              <Label $ml={10} $w={10}>Fill:</Label>
              <Dropdown label="Fill" value="100%" w={26} dim />
            </LayerTools>
            <Layers>
              <Layer $on><Icon name="eye" size={7} /><Thumbnail $k="text"><Icon name="type" size={7} /></Thumbnail>Layer 2</Layer>
              <Layer><Icon name="eye" size={7} /><Thumbnail $k="grad" /><Icon name="link" size={7} /><Thumbnail $k="mask" />Gradient Fill 1</Layer>
              <Layer><Icon name="eye" size={7} /><Thumbnail $k="clear" />Layer 1</Layer>
            </Layers>
            <PanelFoot>
              <Icon name="chain" size={8} /><Fx>fx</Fx>
              {["maskBtn", "adjust", "group", "plus", "trash"].map(n => <Icon key={n} name={n} size={7} />)}
            </PanelFoot>
          </Panel>
        </Dock>
      </Workspace>
      <Taskbar />

      <Palette>
        <PaletteHead><Icon name="expand" size={5} /><Icon name="close" size={4} /></PaletteHead>
        <PaletteTools $h={297}>
          {tools.map(t => <PaletteTool key={t} $on={t === "type"} aria-label={t}><Icon name={t} size={9} /></PaletteTool>)}
        </PaletteTools>
        <Pair><Icon name="mini" size={6} /><Icon name="swap" size={6} /></Pair>
        <ColorChips s={9} />
        <PaletteTools $h={28}>
          <PaletteTool aria-label="Quick mask"><Icon name="mask" size={9} /></PaletteTool>
          <PaletteTool aria-label="Screen mode"><Icon name="screen" size={9} /></PaletteTool>
        </PaletteTools>
      </Palette>

      <FontMenu>
        <FilterBar>
          <Label $w={18}>Filter:</Label>
          <Dropdown label="Classes" value="All Classes" w={51} />
          <Tool $ml={2} aria-label="Adobe Fonts"><Icon name="cloud" size={9} /></Tool>
          <Tool $ml={3} aria-label="Favourites"><Icon name="starFill" size={8} /></Tool>
          <Tool $ml={3} aria-label="Similar"><Icon name="approx" size={7} /></Tool>
          <Divider $ml={5} />
          <Label $ml={6} $w={61}>More from Adobe Fonts:</Label>
          <Tool aria-label="Open Adobe Fonts"><Icon name="cloud" size={10} /></Tool>
        </FilterBar>
        <ListArea>
          <List>
            {g1.map(renderFont)}
            <Rule />
            {g2.map(renderFont)}
            <Rule />
            {g3.map(renderFont)}
          </List>
          <MenuScroll><Icon name="chevUp" size={5} /><Thumb $h={101} $mt={3} /><Spacer /><Icon name="chevDown" size={5} /></MenuScroll>
        </ListArea>
      </FontMenu>
    </Shell>
  );
}
